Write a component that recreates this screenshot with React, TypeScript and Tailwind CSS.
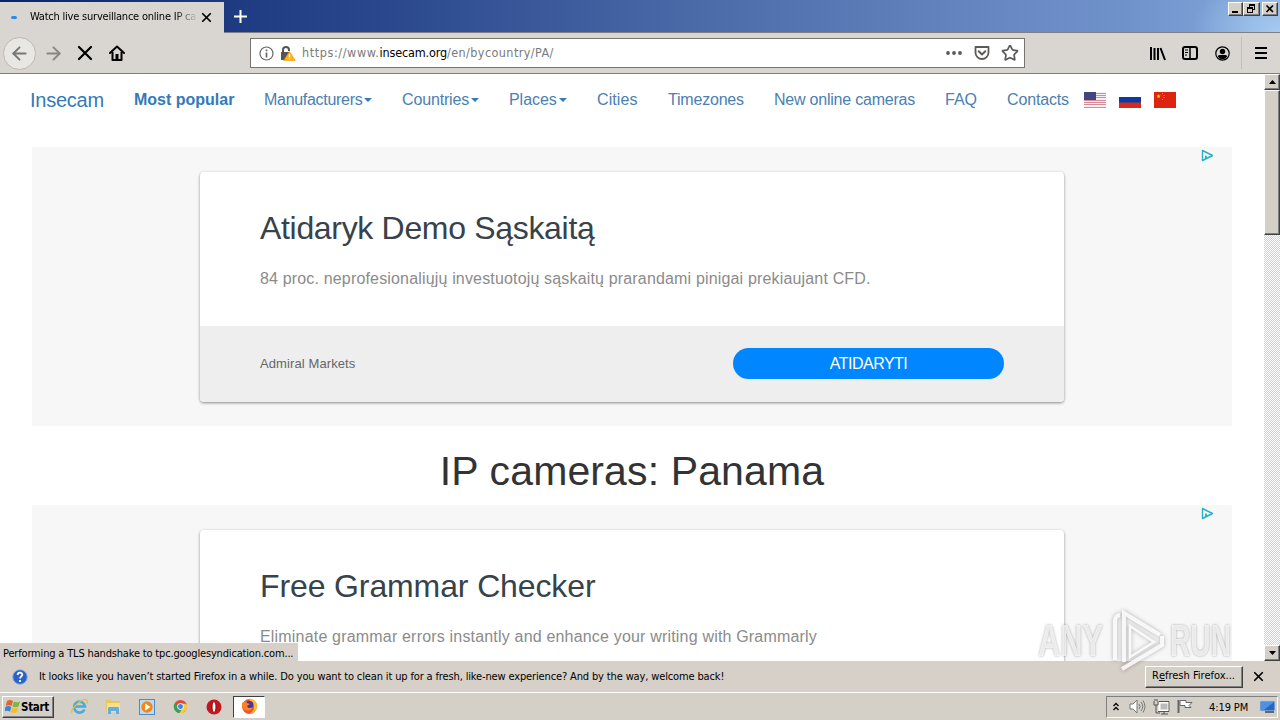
import React from "react";
import { ArrowLeft, ArrowRight, Star, X } from "lucide-react";

const navLinks = [
  { label: "Manufacturers", width: "w-[108px]", spacing: "tracking-[-0.3px]", caret: true },
  { label: "Countries", width: "w-[77px]", spacing: "tracking-[-0.15px]", caret: true },
  { label: "Places", width: "w-[58px]", spacing: "tracking-[-0.05px]", caret: true },
  { label: "Cities", width: "w-[41px]", spacing: "tracking-[0.1px]" },
  { label: "Timezones", width: "w-[76px]", spacing: "tracking-[-0.2px]" },
  { label: "New online cameras", width: "w-[141px]", spacing: "tracking-[-0.22px]" },
  { label: "FAQ", width: "w-[32px]", spacing: "tracking-[0px]" },
  { label: "Contacts", width: "w-[62px]", spacing: "tracking-[-0.15px]" },
];

const raised =
  "border border-t-white border-l-white border-r-[#404040] border-b-[#404040] bg-[#d4d0c8] shadow-[inset_-1px_-1px_0_#808080]";

const UsFlag = () => (
  <svg width="22" height="16" viewBox="0 0 22 16" shapeRendering="crispEdges">
    <rect width="22" height="16" fill="#f4eff2" />
    {[1, 3, 5, 8, 10, 12, 15].map((y) => (
      <rect key={y} y={y} width="22" height="1" fill="#d68c96" />
    ))}
    <rect width="12" height="8" fill="#43467c" />
  </svg>
);

const RuFlag = () => (
  <svg width="22" height="16" viewBox="0 0 22 16">
    <rect width="22" height="16" fill="#fff" />
    <rect y="5" width="22" height="6" fill="#0a3aa6" />
    <rect y="10.5" width="22" height="5.5" fill="#d62a1c" />
  </svg>
);

const CnFlag = () => (
  <svg width="22" height="16" viewBox="0 0 22 16">
    <rect width="22" height="16" fill="#de2410" />
    <path d="M4.500 2l.6 1.500 1.500.1-1.100 1 .3 1.500-1.300-.8-1.300.8.3-1.500-1.100-1 1.500-.1z" fill="#ffd800" />
    <path d="M8 1h1v1H8zM9.500 3h1v1h-1zM9.500 5h1v1h-1zM8 7h1v1H8z" fill="#f0a000" />
  </svg>
);

const AdChoices = () => (
  <svg className="absolute top-[2px] left-[1169px]" width="13" height="13" viewBox="0 0 13 13" fill="none">
    <path d="M1.500 1.500v10L11.500 6.500z" stroke="#25b1c4" strokeWidth="1.400" strokeLinejoin="round" />
    <path d="M4.800 6.500v3.500" stroke="#25b1c4" strokeWidth="1.300" />
    <circle cx="5" cy="8" r="1" fill="#25b1c4" />
  </svg>
);

const TitleBar = () => (
  <div className="flex h-[33px] items-start border-b border-[#808080] bg-[radial-gradient(90px_60px_at_100%_100%,#a6caf0_0%,transparent_100%),linear-gradient(90deg,#0a246a_0%,#1f3c82_19%,#2a478d_30%,#4564a3_50%,#6484bf_75%,#7092cb_88%,#82a9dc_100%)]">
    <div className="mt-[2px] flex h-[31px] w-[224px] items-center bg-[#d9d5d0]">
      <span className="ml-[11px] h-[3px] w-[6px] rounded-full bg-[#2a8dee]" />
      <span className="ml-[13px] w-[168px] overflow-hidden whitespace-nowrap [mask-image:linear-gradient(90deg,#000_86%,transparent)] text-[11px] tracking-[-0.22px]">
        Watch live surveillance online IP ca
      </span>
      <X className="ml-[1px]" size={15} strokeWidth={2.800} />
    </div>
    <svg className="mt-[9px] ml-[9px]" width="15" height="15" viewBox="0 0 15 15">
      <path d="M7.500 1v13M1 7.500h13" stroke="#fff" strokeWidth="2" />
    </svg>
    <div className="ml-auto flex pt-[2px] pr-[2px]">
      <div className={`h-[14px] w-[15px] ${raised}`}>
        <svg width="13" height="12" shapeRendering="crispEdges"><path d="M3 8h6v2H3z" /></svg>
      </div>
      <div className={`h-[14px] w-[17px] ${raised}`}>
        <svg width="15" height="12" fill="none" stroke="#000" shapeRendering="crispEdges">
          <path d="M5.500 4V1.500h5v5H9M5 2h6" />
          <path d="M3.500 4.500h5v5h-5zM3 5h6" />
        </svg>
      </div>
      <div className={`ml-[2px] h-[14px] w-[16px] ${raised}`}>
        <svg width="14" height="12"><path d="M3.500 2.500l6.500 6.500M10 2.500L3.500 9" stroke="#000" strokeWidth="1.700" /></svg>
      </div>
    </div>
  </div>
);

const Toolbar = () => (
  <div className="flex h-[41px] items-center border-b border-[#808080] bg-[#d9d5d0]">
    <div className="ml-[3px] flex h-[33px] w-[33px] shrink-0 items-center justify-center rounded-full border border-[#bcb8b2] bg-[#e9e7e3] text-[#777]">
      <ArrowLeft size={21} strokeWidth={2.200} />
    </div>
    <ArrowRight className="ml-[7px] shrink-0 text-[#8a8783]" size={21} strokeWidth={2.200} />
    <svg className="ml-[13px] shrink-0" width="16" height="16" viewBox="0 0 16 16">
      <path d="M2 2l12 12M14 2L2 14" stroke="#000" strokeWidth="2.200" strokeLinecap="round" />
    </svg>
    <svg className="ml-[16px] shrink-0" width="16" height="16" viewBox="0 0 16 16" fill="none" stroke="#000" strokeWidth="2">
      <path d="M1 8l7-6.500L15 8" strokeLinecap="round" strokeLinejoin="round" />
      <path d="M3.500 7v8h9V7" strokeLinejoin="round" />
      <path d="M8 9v6" strokeWidth="3" />
    </svg>
    <div className="ml-[125px] flex h-[30px] w-[775px] shrink-0 items-center border border-[#77736d] bg-white">
      <svg className="ml-[8px]" width="15" height="15" viewBox="0 0 15 15" fill="none">
        <circle cx="7.500" cy="7.500" r="6.500" stroke="#666" strokeWidth="1.200" />
        <path d="M7.500 6.500v5M7.500 3.500v1.700" stroke="#666" strokeWidth="1.700" />
      </svg>
      <svg className="ml-[6px]" width="16" height="17" viewBox="0 0 16 17">
        <path d="M3 8V5a3 3 0 0 1 6 0v1" fill="none" stroke="#555" strokeWidth="2" />
        <path d="M1 7h9l-4 8H1z" fill="#555" />
        <path d="M9.500 6.500L15.300 15.500H3.700z" fill="#ffb11b" stroke="#e89b00" strokeWidth=".6" strokeLinejoin="round" />
        <path d="M9.500 9v3.500M9.500 13.500v1" stroke="#fff" strokeWidth="1.300" />
      </svg>
      <span className="mt-px ml-[6px] text-[12.500px] tracking-[0.6px] whitespace-nowrap text-[#7a7a7a]">
        https://www.<span className="tracking-[-0.15px] text-black">insecam.org</span>
        <span className="tracking-[0.42px]">/en/bycountry/PA/</span>
      </span>
      <div className="mr-[5px] ml-auto flex items-center text-[#5c5a58]">
        <svg width="16" height="4" fill="currentColor"><circle cx="2" cy="2" r="1.900" /><circle cx="8" cy="2" r="1.900" /><circle cx="14" cy="2" r="1.900" /></svg>
        <svg className="ml-[12px]" width="16" height="15" viewBox="0 0 16 15" fill="none" stroke="currentColor" strokeWidth="1.800" strokeLinejoin="round">
          <path d="M1.500 1h13v5.500a6.500 6.500 0 0 1-13 0z" />
          <path d="M4.700 5.300L8 8.500l3.300-3.200" strokeLinecap="round" strokeWidth="2" />
        </svg>
        <Star className="ml-[11px]" size={18} strokeWidth={2.300} />
      </div>
    </div>
    <div className="mr-[12px] ml-auto flex items-center">
      <svg width="16" height="15" viewBox="0 0 16 15" stroke="#000" strokeWidth="2">
        <path d="M1 1v13M4.500 2v12M8 2v12M10.500 2l4.500 12" />
      </svg>
      <svg className="ml-[16px]" width="16" height="14" viewBox="0 0 16 14" fill="none" stroke="#000">
        <rect x="1" y="1" width="14" height="12" rx="2" strokeWidth="2" />
        <path d="M8 1v12" strokeWidth="1.500" />
        <path d="M3 4h3M3 6.500h3M3 9h2" />
      </svg>
      <svg className="ml-[17px]" width="15" height="15" viewBox="0 0 15 15">
        <circle cx="7.500" cy="7.500" r="6.700" fill="none" stroke="#000" strokeWidth="1.200" />
        <circle cx="7.500" cy="5.500" r="2.700" />
        <path d="M2.600 10c1.300-1 2-.9 3-.9h3.800c1 0 1.700-.1 3 .9-1 2-2.700 3.300-4.900 3.300S3.600 12 2.600 10z" />
      </svg>
      <span className="ml-[11px] h-[32px] w-px bg-[#c1bdb7]" />
      <svg className="ml-[13px]" width="13" height="12" shapeRendering="crispEdges"><path d="M0 0h12v2H0zM0 5h12v2H0zM0 10h12v2H0z" /></svg>
    </div>
  </div>
);

interface AdProps {
  title: string;
  text: string;
  titleSpacing: string;
  textSpacing: string;
  advertiser?: string;
  action?: string;
}

const Ad: React.FC<AdProps> = ({ title, text, titleSpacing, textSpacing, advertiser, action }) => (
  <div className="relative ml-[32px] h-[279px] w-[1200px] shrink-0 bg-[#f7f7f7] pt-[25px]">
    <AdChoices />
    <div className="mx-auto h-[230px] w-[864px] overflow-hidden rounded-[4px] bg-white shadow-[0_1px_3px_rgba(0,0,0,0.45)]">
      <div className="h-[154px] pt-[36px] pl-[60px] whitespace-nowrap">
        <h2 className={`text-[32px] leading-[40px] text-[#37424a] ${titleSpacing}`}>{title}</h2>
        <p className={`mt-[21px] text-[16px] leading-[20px] text-[#8b8b8b] ${textSpacing}`}>{text}</p>
      </div>
      {action && (
        <div className="flex h-[76px] items-center justify-between bg-[#eee] px-[60px] pb-[2px]">
          <span className="pt-[2px] text-[13px] tracking-[0.1px] text-[#666]">{advertiser}</span>
          <span className="flex h-[31px] w-[271px] items-center justify-center rounded-full bg-[#0087ff] pt-[2px] text-[16px] tracking-[-0.5px] text-white">
            {action}
          </span>
        </div>
      )}
    </div>
  </div>
);

const Scrollbar = () => (
  <div className="flex w-[16px] flex-col bg-[repeating-conic-gradient(#d4d0c8_0_25%,#fff_0_50%)] bg-[length:2px_2px]">
    <div className={`flex h-[16px] items-center justify-center ${raised}`}>
      <svg width="7" height="4"><path d="M0 4L3.500 0 7 4z" /></svg>
    </div>
    <div className={`h-[145px] ${raised}`} />
    <div className={`mt-auto flex h-[16px] items-center justify-center ${raised}`}>
      <svg width="7" height="4"><path d="M0 0l3.500 4L7 0z" /></svg>
    </div>
  </div>
);

const Page = () => (
  <div className="flex h-[587px] bg-white">
    <div className="flex min-w-0 flex-1 flex-col overflow-hidden font-['Liberation_Sans',Arial,sans-serif]">
      <nav className="flex h-[73px] shrink-0 items-start pt-[14px] pl-[30px] text-[16px] leading-[24px] whitespace-nowrap text-[#4a80b2]">
        <span className="w-[74px] text-[20px] tracking-[-0.25px] text-[#337ab7]">Insecam</span>
        <span className="ml-[30px] w-[100px] font-bold text-[#337ab7]">Most popular</span>
        {navLinks.map((link) => (
          <span key={link.label} className={`ml-[30px] flex items-center ${link.width} ${link.spacing}`}>
            {link.label}
            {link.caret && <span className="ml-[2px] border-x-[4px] border-t-[4px] border-x-transparent border-t-[#337ab7]" />}
          </span>
        ))}
        <div className="mt-[4px] ml-[15px] flex gap-[13px]">
          <UsFlag />
          <RuFlag />
          <CnFlag />
        </div>
      </nav>
      <Ad
        title="Atidaryk Demo Sąskaitą"
        text="84 proc. neprofesionaliųjų investuotojų sąskaitų prarandami pinigai prekiaujant CFD."
        titleSpacing="tracking-[-0.32px]"
        textSpacing="tracking-[0.165px]"
        advertiser="Admiral Markets"
        action="ATIDARYTI"
      />
      <h1 className="h-[79px] shrink-0 pt-[21px] text-center text-[41px] leading-[48px] tracking-[0.12px] text-[#333]">
        IP cameras: Panama
      </h1>
      <Ad
        title="Free Grammar Checker"
        text="Eliminate grammar errors instantly and enhance your writing with Grammarly"
        titleSpacing="tracking-[-0.12px]"
        textSpacing="tracking-[0.185px]"
      />
    </div>
    <Scrollbar />
  </div>
);

const Notification = () => (
  <div className="flex h-[31px] items-center bg-[#d6d0c8]">
    <svg className="ml-[12px]" width="16" height="16" viewBox="0 0 16 16">
      <circle cx="8" cy="8" r="7.300" fill="#2c62c4" stroke="#8eb0e8" />
      <path d="M5.700 6c0-3 4.600-3 4.600-.3C10.300 7.400 8 7.500 8 9.600M8 11v2" fill="none" stroke="#fff" strokeWidth="1.800" />
    </svg>
    <span className="mt-[2px] ml-[11px] text-[11px] tracking-[-0.14px] whitespace-nowrap">
      It looks like you haven’t started Firefox in a while. Do you want to clean it up for a fresh, like-new experience? And by the way, welcome back!
    </span>
    <div className={`mr-[8px] ml-auto flex h-[22px] w-[98px] items-center justify-center pr-[1px] text-[11px] ${raised}`}>
      R<u>e</u>fresh Firefox...
    </div>
    <X className="mr-[14px]" size={15} strokeWidth={2.800} />
  </div>
);

const Taskbar = () => (
  <div className="flex h-[28px] items-center border-t border-white bg-[#d4d0c8]">
    <div className={`ml-[2px] flex h-[22px] w-[52px] items-center pl-[2px] text-[11px] font-bold ${raised}`}>
      <svg width="16" height="15" viewBox="0 0 16 15">
        <path d="M2 2q3-2 6 0L6.500 7Q4 5.500.800 6.800z" fill="#e8632c" />
        <path d="M8.800 2.400q3 1.600 6.200 0L13.500 7.500q-3 1.500-6 0z" fill="#7fb742" />
        <path d="M.600 7.700q3-1.500 5.700.2L5 12.800Q2.500 11-.800 12.500z" fill="#3e83d2" />
        <path d="M7.200 8.500q3 1.500 6 0L12 13.300q-3 1.500-6.200 0z" fill="#f6bd2a" />
      </svg>
      <span className="mt-[2px] text-[11.500px] tracking-[-0.3px]">Start</span>
    </div>
    <svg className="ml-[17px]" width="17" height="17" viewBox="0 0 17 17" fill="none">
      <path d="M13.500 11.500A5.500 5.500 0 1 1 14 8.500H4" stroke="#43ace4" strokeWidth="2.600" />
      <path d="M1 15C-1 11 12-1 16 2c1 1 0 3-1 4" stroke="#edbd3b" strokeWidth="1.300" />
    </svg>
    <svg className="ml-[17px]" width="17" height="16" viewBox="0 0 17 16">
      <path d="M1 1h5l1 1h8v11H1z" fill="#e8c65a" />
      <path d="M2 4h13v9H2z" fill="#f7e08c" />
      <path d="M3 15V9l1-1h9l1 1v6h-3v-3H6v3z" fill="#62aee0" />
    </svg>
    <svg className="ml-[17px]" width="16" height="16" viewBox="0 0 16 16">
      <rect x=".5" y=".5" width="15" height="15" fill="#bcdaf1" stroke="#4b8ec7" />
      <circle cx="8" cy="8" r="5.700" fill="#f28717" />
      <path d="M6 4.500v7L11.500 8z" fill="#fff" />
    </svg>
    <svg className="ml-[18px]" width="15" height="15" viewBox="0 0 16 16">
      <circle cx="8" cy="8" r="7" fill="#e3473a" />
      <path d="M1.500 5A7 7 0 0 0 7 15l3.500-6z" fill="#35a353" />
      <path d="M8 5h6.300A7 7 0 0 1 7 15l4-7z" fill="#f8ca3d" />
      <circle cx="8" cy="8" r="3.200" fill="#4285e8" stroke="#fff" />
    </svg>
    <svg className="ml-[18px]" width="16" height="16" viewBox="0 0 16 16">
      <ellipse cx="8" cy="8" rx="7.500" ry="7.500" fill="#c4161c" />
      <ellipse cx="8" cy="8" rx="2" ry="5.500" fill="#fff" stroke="#8a0c10" />
    </svg>
    <div className="ml-[11px] flex h-[22px] w-[32px] items-center justify-center border border-t-[#404040] border-r-white border-b-white border-l-[#404040] bg-white">
      <svg width="17" height="17" viewBox="0 0 17 17">
        <circle cx="8.500" cy="8.500" r="7.500" fill="#f6502c" />
        <path d="M8 1c5-1 9 4 8 8-1 5-5 7-8 7 5-3 6-5 4-9z" fill="#ffbd2f" />
        <circle cx="8.500" cy="7" r="4" fill="#4536a0" />
        <path d="M1 5l3-2 2 2 3 1-3 2c1 3 4 2 6 1-2 5-10 5-11-1z" fill="#ff8125" />
      </svg>
    </div>
    <div className="mr-[2px] ml-auto flex h-[22px] w-[172px] items-center border border-t-[#808080] border-r-white border-b-white border-l-[#808080]">
      <svg className="ml-[6px]" width="6" height="9" fill="none" stroke="#000" strokeWidth="1.300"><path d="M.500 4L3 1.500 5.500 4M.500 8L3 5.500 5.500 8" /></svg>
      <svg className="ml-[10px]" width="17" height="15" viewBox="0 0 17 15" fill="none" stroke="#777">
        <path d="M1 5h3l4-4v13L4 10H1z" fill="#fff" />
        <path d="M10 5q2 2.500 0 5M12 3q3.500 4.500 0 9M14 1.500q4 6 0 12" />
      </svg>
      <svg className="ml-[7px]" width="17" height="16" viewBox="0 0 17 16" fill="none" stroke="#555">
        <path d="M6.500 3.500h9v8h-9z" fill="#bbb" stroke="#fff" strokeWidth="2" />
        <path d="M6 2.500h10v10H5M8 15h7M11 12v3" />
        <path d="M1 2v4h4V2M2 0v2M4 0v2M3 6v8h4" />
      </svg>
      <svg className="ml-[7px]" width="16" height="15" viewBox="0 0 16 15" stroke="#666">
        <path d="M1.500 1v13" stroke="#666" strokeWidth="2" />
        <path d="M3 1.500h6v2h6l-3 3 2 2H8v-2H3z" fill="#fff" />
      </svg>
      <span className="mt-[3px] ml-[16px] text-[11px] tracking-[-0.1px] whitespace-nowrap">4:19 PM</span>
      <svg className="mr-px ml-auto" width="17" height="14" viewBox="0 0 17 14">
        <rect x="1" y="1" width="15" height="10" fill="#2467c5" stroke="#b9cce5" />
        <path d="M2 2h13L5 10H2z" fill="#4d91df" />
        <path d="M6 12h9" stroke="#444" strokeWidth="1.500" />
      </svg>
    </div>
  </div>
);

const Watermark = () => (
  <div className="absolute top-[606px] left-[1038px] flex h-[70px] w-[240px] items-center font-['Liberation_Sans',Arial,sans-serif] text-[44px] font-bold text-white/75 [text-shadow:0_0_3px_rgba(0,0,0,0.35)]">
    <span className="w-[132px] shrink-0 origin-left scale-x-[0.7]">ANY</span>
    <svg className="absolute left-[70px] drop-shadow-[0_0_2px_rgba(0,0,0,0.35)]" width="58" height="66" viewBox="0 0 58 66" fill="none" stroke="#fff" strokeOpacity=".85" strokeWidth="4">
      <path d="M16 54V5l36 22" />
      <path d="M7 52V13q0-5 5-6" />
      <path d="M22 18v31l24-15z" strokeWidth="2.500" />
      <path d="M14 61l40-24v-9" />
    </svg>
    <span className="shrink-0 origin-left scale-x-[0.64]">RUN</span>
  </div>
);

export default function App() {
  return (
    <div className="relative h-[720px] w-[1280px] overflow-hidden bg-[#d4d0c8] font-['DejaVu_Sans_Condensed','DejaVu_Sans',sans-serif] text-black">
      <TitleBar />
      <Toolbar />
      <Page />
      <Notification />
      <Taskbar />
      <div className="absolute top-[643px] left-0 flex h-[18px] w-[298px] items-center bg-[#d6d0c8] pt-[4px] pl-[3px] text-[11px] tracking-[-0.17px] whitespace-nowrap">
        Performing a TLS handshake to tpc.googlesyndication.com...
      </div>
      <Watermark />
    </div>
  );
}
